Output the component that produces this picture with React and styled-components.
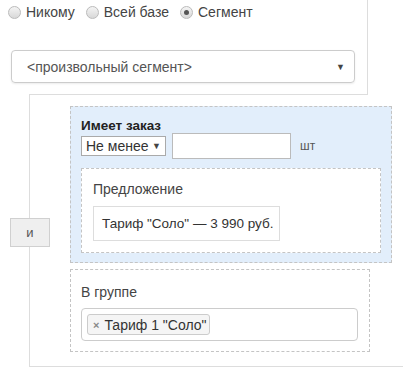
import React from "react"
import styled, {createGlobalStyle} from "styled-components"

const GlobalStyle = createGlobalStyle`
    body {
        margin: 0;
        background: #fff;
        font-family: "Liberation Sans", Arial, sans-serif;
        color: #333;
    }
`

const Page = styled.div`
    width: 403px;
    height: 376px;
    overflow: hidden;
`
const TopColumn = styled.div`
    width: 368px;
    height: 95px;
    border-right: 1px solid #ddd;
    box-sizing: border-box;
    padding-top: 4px;
`
const RadioRow = styled.div`
    display: flex;
    align-items: center;
    padding-left: 8px;
    gap: 11px;
    height: 16px;
`
const RadioLabel = styled.label`
    display: flex;
    align-items: center;
    gap: 5px;
    font-size: 14px;
    color: #444;
`
const RadioDot = styled.span`
    width: 11px;
    height: 11px;
    border-radius: 50%;
    border: 1px solid #bbb;
    background: linear-gradient(#f4f4f4, #d8d8d8);
    display: flex;
    align-items: center;
    justify-content: center;
    &::after {
        content: "";
        width: 5px;
        height: 5px;
        border-radius: 50%;
        background: ${p => (p.checked ? "#555" : "transparent")};
    }
`
const SegmentSelect = styled.div`
    margin: 30px 0 0 11px;
    width: 344px;
    height: 33px;
    box-sizing: border-box;
    border: 1px solid #ccc;
    border-radius: 4px;
    box-shadow: 0 1px 2px rgba(0, 0, 0, 0.08);
    display: flex;
    align-items: center;
    justify-content: space-between;
    padding: 0 9px 0 15px;
    font-size: 14px;
    color: #555;
`
const Arrow = styled.span`
    font-size: 9px;
    color: #444;
`
const OuterBox = styled.div`
    position: relative;
    margin-left: 29px;
    height: 271px;
    border-left: 1px solid #ddd;
    border-bottom: 1px solid #ddd;
    display: flex;
    align-items: center;
    &::before {
        content: "";
        position: absolute;
        top: -1px;
        left: -1px;
        width: 339px;
        border-top: 1px solid #ddd;
    }
`
const AndButton = styled.div`
    width: 40px;
    height: 29px;
    box-sizing: border-box;
    margin-left: -20px;
    margin-top: 3px;
    background: #efefef;
    border: 1px solid #d0d0d0;
    display: flex;
    align-items: center;
    justify-content: center;
    font-size: 13px;
    color: #555;
`
const Conditions = styled.div`
    align-self: flex-start;
    margin-left: 20px;
    padding-top: 11px;
    display: flex;
    flex-direction: column;
    gap: 6px;
`
const CondBox = styled.div`
    width: ${p => p.width}px;
    box-sizing: border-box;
    border: 1px dashed #c4c4c4;
    background: ${p => (p.blue ? "#e2eefb" : "#fff")};
    padding: ${p => p.pad};
`
const Title = styled.div`
    font-weight: bold;
    font-size: 13.5px;
    color: #222;
    line-height: 15px;
`
const InlineRow = styled.div`
    display: flex;
    align-items: center;
    gap: 6px;
`
const SmallSelect = styled.div`
    width: 85px;
    height: 20px;
    box-sizing: border-box;
    border: 1px solid #aaa;
    background: #fff;
    display: flex;
    align-items: center;
    justify-content: space-between;
    padding: 0 4px 0 4px;
    font-size: 14px;
    color: #333;
`
const NumberInput = styled.div`
    width: 119px;
    height: 26px;
    box-sizing: border-box;
    border: 1px solid #bbb;
    background: #fff;
`
const Unit = styled.span`
    margin-left: 3px;
    font-size: 12px;
    color: #555;
`
const Label = styled.div`
    font-size: 14px;
    color: #444;
    line-height: 15px;
`
const OfferBox = styled.div`
    display: inline-block;
    margin-top: 9px;
    height: 35px;
    box-sizing: border-box;
    border: 1px solid #ddd;
    padding: 0 6px 0 8px;
    line-height: 33px;
    font-size: 13.5px;
    color: #333;
`
const TagInput = styled.div`
    margin-top: 8px;
    height: 33px;
    box-sizing: border-box;
    border: 1px solid #ccc;
    border-radius: 4px;
    display: flex;
    align-items: center;
    padding-left: 5px;
`
const Tag = styled.div`
    height: 21px;
    box-sizing: border-box;
    border: 1px solid #ccc;
    border-radius: 3px;
    background: #f5f5f5;
    display: flex;
    align-items: center;
    gap: 5px;
    padding: 0 3px 0 5px;
    font-size: 14px;
    color: #333;
`
const TagClose = styled.span`
    font-size: 11px;
    font-weight: bold;
    color: #888;
`

const radios = [
    {label: "Никому", checked: false},
    {label: "Всей базе", checked: false},
    {label: "Сегмент", checked: true},
]

export default function App() {
    return (
        <Page>
            <GlobalStyle/>
            <TopColumn>
                <RadioRow>
                    {radios.map(r => (
                        <RadioLabel key={r.label}>
                            <RadioDot checked={r.checked}/>
                            {r.label}
                        </RadioLabel>
                    ))}
                </RadioRow>
                <SegmentSelect>
                    <span>&lt;произвольный сегмент&gt;</span>
                    <Arrow>▼</Arrow>
                </SegmentSelect>
            </TopColumn>

            <OuterBox>
                <AndButton>и</AndButton>
                <Conditions>
                    <CondBox blue width={322} pad="11px 10px 9px 10px">
                        <Title>Имеет заказ</Title>
                        <InlineRow>
                            <SmallSelect>
                                <span>Не менее</span>
                                <Arrow>▼</Arrow>
                            </SmallSelect>
                            <NumberInput/>
                            <Unit>шт</Unit>
                        </InlineRow>
                        <CondBox width={300} pad="13px 10px 11px 11px" style={{marginTop: 9}}>
                            <Label>Предложение</Label>
                            <OfferBox>Тариф "Соло" — 3 990 руб.</OfferBox>
                        </CondBox>
                    </CondBox>
                    <CondBox width={300} pad="15px 11px 10px 10px">
                        <Label>В группе</Label>
                        <TagInput>
                            <Tag>
                                <TagClose>×</TagClose>
                                Тариф 1 "Соло"
                            </Tag>
                        </TagInput>
                    </CondBox>
                </Conditions>
            </OuterBox>
        </Page>
    )
}
